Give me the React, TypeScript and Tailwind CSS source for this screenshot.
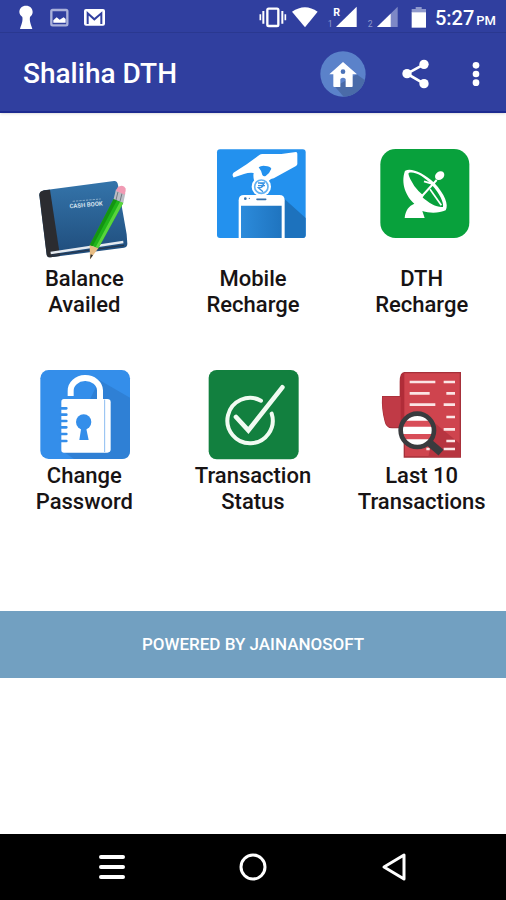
import type { ReactNode } from "react";

function TileIcon({ box, children }: { box: string; children: ReactNode }) {
  return (
    <svg viewBox={box} className="block h-[90px] w-[110px] shrink-0 overflow-visible" aria-hidden="true">
      {children}
    </svg>
  );
}

function StatusBar() {
  return (
    <div className="flex h-[33px] items-center border-b border-[#2a3890] pr-[10px] pl-4 text-white">
      <div className="flex items-center gap-[14px]">
        <svg viewBox="48 0 60 99" className="h-[33px] w-5" fill="#fff" aria-hidden="true">
          <path d="M78 17c-12 0-20 8-20 19 0 7 5 12 9 15 2 12-2 20-7 36h37c-5-16-9-24-7-36 4-3 8-8 8-15 0-11-8-19-20-19z" />
        </svg>
        <svg viewBox="150 0 57 99" className="h-[33px] w-[19px]" aria-hidden="true">
          <rect x="154" y="30" width="48" height="46" rx="4" fill="none" stroke="#aab1da" strokeWidth="7" />
          <path d="M160 68V61l10-9 9 7 12-7 6 5v11z" fill="#fff" />
        </svg>
        <svg viewBox="246 0 69 99" className="h-[33px] w-[23px]" aria-hidden="true">
          <rect x="249" y="27" width="63" height="50" rx="6" fill="#fff" />
          <path d="M260 72V40l20 18 21-18v32" fill="none" stroke="#303f9f" strokeWidth="6" />
        </svg>
      </div>
      <div className="ml-auto flex items-center gap-1">
        <svg viewBox="9 0 87 99" className="h-[33px] w-[29px]" fill="none" stroke="#fff" aria-hidden="true">
          <rect x="37" y="26" width="33" height="52" rx="4" strokeWidth="7" />
          <path d="M25 33v38M82 33v38" strokeWidth="6" />
          <path d="M16 43v18M91 43v18" strokeWidth="5" />
        </svg>
        <svg viewBox="108 0 84 99" className="h-[33px] w-7" fill="#fff" aria-hidden="true">
          <path d="M111 35q39-27 77 0L150 82z" />
        </svg>
        <svg viewBox="204 0 108 99" className="h-[33px] w-9" fill="#fff" aria-hidden="true">
          <path d="M305 20v61h-62z" />
          <text x="235" y="47" fontSize="32" fontWeight="700" fontFamily="Roboto, sans-serif">R</text>
          <text x="218" y="82" fontSize="26" fill="#8f99cc" fontFamily="Roboto, sans-serif">1</text>
        </svg>
        <svg viewBox="324 0 120 99" className="h-[33px] w-10" fill="#fff" aria-hidden="true">
          <path d="M428 20v61h-62z" fill="#7d88c6" />
          <path d="M407 41v40h-41z" />
          <text x="338" y="82" fontSize="26" fill="#8f99cc" fontFamily="Roboto, sans-serif">2</text>
        </svg>
        <svg viewBox="456 0 72 99" className="h-[33px] w-6" aria-hidden="true">
          <path d="M470 27h12v-6h18v6h13v12h-43z" fill="#8f99cc" />
          <path d="M470 37h43v46h-43z" fill="#fff" />
        </svg>
        <div className="flex items-baseline gap-[2px] pt-1 font-medium">
          <span className="text-xl">5:27</span>
          <span className="text-[13px]">PM</span>
        </div>
      </div>
    </div>
  );
}

function AppBar() {
  return (
    <header className="flex h-20 items-center border-b-2 border-[#1c2a90] pt-1 pr-5 pl-[23px] text-white">
      <h1 className="text-[28px] leading-8 font-medium">Shaliha DTH</h1>
      <div className="ml-auto flex items-center gap-8">
        <button type="button" aria-label="Home">
          <svg viewBox="203 152 138 138" className="size-[46px]" aria-hidden="true">
            <circle cx="272" cy="221" r="68" fill="#5b82ca" />
            <path d="M313 222l25 18a68 68 0 0 1-64 49l-26-30z" fill="#4a6ba8" />
            <path d="M272 185l42 37h-13v36q0 2-3 2h-18v-24q-8-8-16 0v24h-18q-3 0-3-2v-36h-12z" fill="#fff" />
            <circle cx="272" cy="214" r="7" fill="#4a72b8" />
          </svg>
        </button>
        <button type="button" aria-label="Share">
          <svg viewBox="438 167 108 108" className="size-9" fill="#fff" aria-hidden="true">
            <path d="M516 192l-51 28 51 30" fill="none" stroke="#fff" strokeWidth="8" />
            <circle cx="516" cy="192" r="14" />
            <circle cx="465" cy="220" r="14" />
            <circle cx="516" cy="250" r="14" />
          </svg>
        </button>
        <button type="button" aria-label="More options">
          <svg viewBox="638 167 60 108" className="h-9 w-5" fill="#fff" aria-hidden="true">
            <circle cx="668" cy="195" r="10" />
            <circle cx="668" cy="221" r="10" />
            <circle cx="668" cy="247" r="10" />
          </svg>
        </button>
      </div>
    </header>
  );
}

const bookIcon = (
  <>
    <defs>
      <linearGradient id="cover" x1="0" y1="0" x2="0" y2="1">
        <stop offset="0" stopColor="#3474aa" />
        <stop offset="1" stopColor="#1f4c7b" />
      </linearGradient>
    </defs>
    <path d="M62 156q-5 4-4 10l22 178q2 9 12 8l220-29q10-2 10-12l-2-28-26-148q-2-13-12-12L72 151z" fill="url(#cover)" />
    <path d="M90 149l-18 2q-15 3-14 15l22 178q2 9 12 8l28-4z" fill="#2b2c30" />
    <path d="M92 339l218-33" stroke="#e5eaf0" strokeWidth="7" />
    <path d="M94 346l218-30" stroke="#26364c" strokeWidth="4" />
    <path d="M158 184l84-7" stroke="#86abc9" strokeWidth="3" strokeDasharray="7 3" />
    <text x="149" y="205" fontSize="18" fontWeight="700" fill="#d5e2ee" fontFamily="Roboto, sans-serif" transform="rotate(-5 149 205)">CASH BOOK</text>
    <path d="M281 177l29 11-75 137-26-9z" fill="#20b51b" />
    <path d="M281 177l10 4-73 138-9-3z" fill="#149412" />
    <path d="M301 184l9 4-75 137-8-3z" fill="#58d43c" />
    <path d="M209 316l26 9-25 33z" fill="#e7bc83" />
    <path d="M212 343l7 3-9 12z" fill="#333" />
    <path d="M288 148l28 12-6 28-29-11z" fill="#b9bdc4" />
    <path d="M294 155l-6 25M306 160l-6 24" stroke="#747982" strokeWidth="3" />
    <path d="M288 152l5-10q10-8 20-2 6 4 4 12l-3 12z" fill="#f19bb4" />
  </>
);

const mobileIcon = (
  <>
    <defs>
      <linearGradient id="screen" x1="0" y1="0" x2="1" y2="0">
        <stop offset="0" stopColor="#2c8bdb" />
        <stop offset="1" stopColor="#1f74bf" />
      </linearGradient>
    </defs>
    <rect x="81" y="28" width="266" height="266" rx="9" fill="#2391ee" />
    <path d="M276 170l71 64v51q0 9-9 9h-55z" fill="#1d72bd" />
    <path d="M129 109c-3-5 0-10 5-13l36-23 38-28q4-3 9-3h57l44-6q4 0 4 5v31q0 3-4 6l-60 33q-6 4-15 6-10 8-16 14l-20-6-15-4q-3-14-1-22-13-2-29 3l-29 10q-3 2-4-3z" fill="#fff" />
    <path d="M206 82q8-6 20-4 14 0 18 8-4 12-17 22-6 3-10-3-2-12-11-23z" fill="#2391ee" />
    <circle cx="214" cy="140" r="29" fill="#fff" />
    <circle cx="214" cy="140" r="20" fill="none" stroke="#63b2f3" strokeWidth="5" />
    <path d="M204 129h21M204 137h21M209 129q20 2 5 13l-9 1 14 12" fill="none" stroke="#3992e2" strokeWidth="4" />
    <path d="M146 294V181q0-16 16-16h106q16 0 16 16v113z" fill="#fff" />
    <path d="M153 197h122v97H153z" fill="url(#screen)" />
    <path d="M201 178h26" stroke="#356fa9" strokeWidth="5" strokeLinecap="round" />
    <circle cx="166" cy="176" r="4" fill="#356fa9" />
    <circle cx="178" cy="175" r="2" fill="#356fa9" />
  </>
);

const dishIcon = (
  <>
    <rect x="91" y="27" width="267" height="267" rx="46" fill="#08a13c" />
    <path d="M165 92c-14 38 4 78 28 99-16 6-27 20-29 43h60l-7-21c24 8 52 6 70-2 10-16-3-49-34-82-32-32-72-47-87-37z" fill="#fff" />
    <path d="M176 99c17-7 48 12 69 35 24 26 37 54 34 67-18 2-41-10-65-32-26-25-44-57-38-70z" fill="#08a13c" />
    <path d="M173 98q14 42 48 69l-12 18q-35-22-40-74z" fill="#fff" />
    <path d="M208 177l52-57M222 124l33 10" stroke="#fff" strokeWidth="6" fill="none" />
    <path d="M240 148l34 48" stroke="#fff" strokeWidth="5" fill="none" />
    <ellipse cx="269" cy="107" rx="15" ry="12" transform="rotate(-38 269 107)" fill="#fff" />
  </>
);

const lockIcon = (
  <>
    <rect x="61" y="30" width="269" height="267" rx="25" fill="#348eea" />
    <path d="M238 60l92 53v159q0 25-25 25H162l-29-20z" fill="#2f80d5" />
    <path d="M152 108V93a43 37 0 0 1 88-2v28" fill="none" stroke="#fff" strokeWidth="18" />
    <path d="M132 117h130q10 0 10 10v141q0 10-10 10H132q-8 0-8-8V125q0-8 8-8z" fill="#fff" />
    <path d="M254 119v157" stroke="#8bbcf1" strokeWidth="3" />
    <path d="M121 145h18M121 164h18M121 183h18M121 202h18M121 222h18M121 243h18" stroke="#348eea" strokeWidth="8" strokeLinecap="round" />
    <circle cx="191" cy="186" r="23" fill="#348eea" />
    <path d="M184 202h14l8 38h-28z" fill="#348eea" />
  </>
);

const statusIcon = (
  <>
    <rect x="56" y="30" width="270" height="268" rx="24" fill="#12803f" />
    <path d="M213 122a68 68 0 1 0 32 39" fill="none" stroke="#f1fbf2" strokeWidth="12" strokeLinecap="round" />
    <path d="M138 171l37 40L277 82" fill="none" stroke="#f1fbf2" strokeWidth="14" strokeLinecap="round" />
  </>
);

const historyIcon = (
  <>
    <path d="M163 38q-12 0-12 28v44H98q-2 35 7 71 4 22 21 22h37v88h168V38z" fill="#cf444e" stroke="#a6303a" strokeWidth="4" />
    <path d="M163 38q-12 0-12 28v136h12z" fill="#b02c38" />
    <path d="M98 110h53v92h-25q-17 0-21-21-9-36-7-71z" fill="#c03a46" />
    <path d="M255 190l76 62v39H235z" fill="#b73540" />
    <path d="M179 66h77M179 100h60M179 134h77M281 66h34M289 100h26M281 134h34M289 171h26M281 208h34M289 243h26M281 267h34M229 267h10" stroke="#fbe5e5" strokeWidth="8" />
    <circle cx="202" cy="211" r="50" fill="#d84d58" />
    <path d="M168 182q6-10 16-14h36q10 4 16 14zM158 200h89v22h-89zM164 238h76q-10 18-26 18h-26q-16-3-24-18z" fill="#fff" />
    <circle cx="202" cy="211" r="50" fill="none" stroke="#393b3e" strokeWidth="14" />
    <path d="M237 247l36 31" stroke="#393b3e" strokeWidth="23" />
  </>
);

const topTiles = [
  { lines: ["Balance", "Availed"], box: "27 27 330 270", icon: bookIcon },
  { lines: ["Mobile", "Recharge"], box: "24 27 330 270", icon: mobileIcon },
  { lines: ["DTH", "Recharge"], box: "51 27 330 270", icon: dishIcon },
];

const bottomTiles = [
  { lines: ["Change", "Password"], box: "27 30 330 270", icon: lockIcon },
  { lines: ["Transaction", "Status"], box: "24 30 330 270", icon: statusIcon },
  { lines: ["Last 10", "Transactions"], box: "51 30 330 270", icon: historyIcon },
];

function TileRow({ tiles, gap }: { tiles: typeof topTiles; gap: string }) {
  return (
    <div className="grid grid-cols-3">
      {tiles.map((tile) => (
        <button key={tile.lines.join(" ")} type="button" className={`flex flex-col items-center ${gap}`}>
          <TileIcon box={tile.box}>{tile.icon}</TileIcon>
          <span className="text-[22px] leading-[26px] font-medium text-[#171314]">
            {tile.lines[0]}
            <br />
            {tile.lines[1]}
          </span>
        </button>
      ))}
    </div>
  );
}

export default function App() {
  return (
    <div className="flex min-h-screen flex-col bg-white font-['Roboto',sans-serif]">
      <div className="bg-[#303f9f] shadow">
        <StatusBar />
        <AppBar />
      </div>
      <main className="flex-1">
        <div className="flex flex-col gap-[52px] pt-9 pb-24">
          <TileRow tiles={topTiles} gap="gap-[27px]" />
          <TileRow tiles={bottomTiles} gap="gap-[3px]" />
        </div>
        <p className="flex h-[67px] items-center justify-center bg-[#72a0c1] text-[17px] font-medium text-white">
          POWERED BY JAINANOSOFT
        </p>
      </main>
      <nav className="grid h-[66px] grid-cols-[1fr_141px_141px_141px_1fr] items-center bg-black">
        <button type="button" aria-label="Recent apps" className="col-start-2 flex justify-center">
          <svg viewBox="0 0 30 30" className="size-[30px]" stroke="#fff" strokeWidth="4" strokeLinecap="round" aria-hidden="true">
            <path d="M4 5h22M4 15h22M4 25h22" />
          </svg>
        </button>
        <button type="button" aria-label="Home screen" className="flex justify-center">
          <svg viewBox="0 0 30 30" className="size-[30px]" fill="none" stroke="#fff" strokeWidth="3" aria-hidden="true">
            <circle cx="15" cy="15" r="12" />
          </svg>
        </button>
        <button type="button" aria-label="Back" className="flex justify-center">
          <svg viewBox="0 0 30 30" className="size-[30px]" fill="none" stroke="#fff" strokeWidth="3" strokeLinejoin="round" aria-hidden="true">
            <path d="M25 3v24L5 15z" />
          </svg>
        </button>
      </nav>
    </div>
  );
}
